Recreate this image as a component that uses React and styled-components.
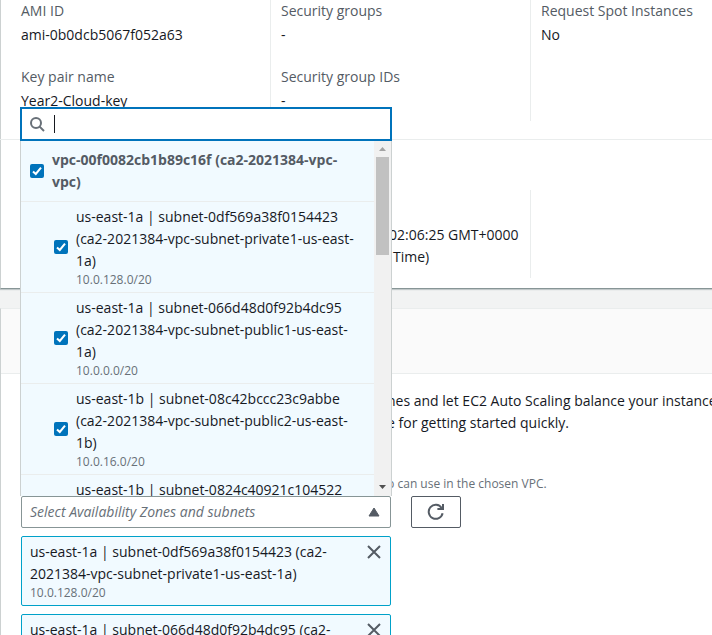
import React from "react";
import styled, { createGlobalStyle } from "styled-components";

const GlobalStyle = createGlobalStyle`
  *, *::before, *::after { box-sizing: border-box; }
  body {
    margin: 0;
    background: #f2f3f3;
    color: #16191f;
    font: 14px/22px "Open Sans", "Noto Sans", sans-serif;
  }
  dl, dd, p { margin: 0; }
  button, input { font: inherit; color: inherit; }
`;

const Page = styled.main`
  display: flex;
  flex-direction: column;
  gap: 19px;
  height: 100vh;
  overflow: hidden;
`;

const Panel = styled.section`
  flex: ${(p) => (p.$fill ? "1 0 auto" : "none")};
  background: #fff;
  border-left: 1px solid #ccd1d1;
  border-top: ${(p) => (p.$fill ? "1px solid #eaeded" : "0")};
  border-bottom: ${(p) => (p.$fill ? "0" : "1px solid #879596")};
  box-shadow: 0 1px 1px rgba(0, 28, 36, 0.2);
`;

const Columns = styled.div`
  display: grid;
  grid-template-columns: 270px 260px 1fr;
  padding: ${(p) => (p.$lower ? "50px 0 10px" : "0 0 18px")};
  border-bottom: ${(p) => (p.$lower ? "0" : "1px solid #eaeded")};
  margin-left: -1px;
`;

const Column = styled.dl`
  display: flex;
  flex-direction: column;
  gap: 20px;
  min-height: ${(p) => (p.$lower ? "88px" : "121px")};
  padding-left: ${(p) => (p.$first ? "21px" : "10px")};
  padding-top: ${(p) => (p.$lower ? "34px" : "0")};
  border-left: ${(p) => (p.$first ? "0" : "1px solid #eaeded")};
`;

const Pair = styled.div`
  display: flex;
  flex-direction: column;
  gap: 2px;
`;

const Term = styled.dt`
  color: #545b64;
`;

const DateValue = styled.dd`
  align-self: flex-end;
  width: 141px;
`;

const TimeZone = styled.span`
  display: block;
  padding-left: 4px;
`;

const PanelHeader = styled.header`
  height: 65px;
  background: #fafafa;
  border-bottom: 1px solid #eaeded;
`;

const PanelBody = styled.div`
  padding: 16px 0 0 20px;
`;

const Description = styled.p`
  padding-left: 366px;
  white-space: nowrap;
`;

const Hint = styled.p`
  padding: 42px 0 4px 366px;
  color: #687078;
  font-size: 12px;
  line-height: 16px;
`;

const FieldRow = styled.div`
  display: flex;
  align-items: flex-start;
  gap: 20px;
`;

const Field = styled.div`
  position: relative;
  width: 370px;
`;

const SelectTrigger = styled.button`
  display: flex;
  align-items: center;
  justify-content: space-between;
  width: 100%;
  height: 32px;
  padding: 0 10px 0 8px;
  background: #fff;
  border: 1px solid #879596;
  border-radius: 2px;
  color: #687078;
  font-style: italic;
  text-align: left;
`;

const RefreshButton = styled.button`
  display: flex;
  align-items: center;
  justify-content: center;
  width: 50px;
  height: 32px;
  padding: 0;
  background: #fff;
  border: 1px solid #545b64;
  border-radius: 2px;
`;

const Menu = styled.div`
  position: absolute;
  bottom: 100%;
  left: -1px;
  right: -1px;
  z-index: 1;
`;

const SearchBox = styled.label`
  display: flex;
  align-items: center;
  gap: 9px;
  height: 34px;
  padding-left: 7px;
  background: #fff;
  border: 2px solid #0073bb;
`;

const SearchInput = styled.input`
  flex: 1;
  min-width: 0;
  height: 18px;
  padding: 0;
  border: 0;
  border-left: 1px solid #16191f;
  outline: 0;
  background: transparent;
`;

const ListFrame = styled.div`
  display: flex;
  height: 355px;
  background: #f1faff;
  border: 1px solid #ccd1d1;
  border-width: 0 1px;
`;

const Options = styled.div`
  flex: 1;
  min-width: 0;
  overflow: hidden;
`;

const Option = styled.label`
  display: flex;
  align-items: center;
  gap: 8px;
  padding: ${(p) => (p.$group ? "8px 9px" : "4px 9px 4px 33px")};
  border-bottom: 1px solid #eaeded;
  color: ${(p) => (p.$group ? "#545b64" : "#16191f")};
  font-weight: ${(p) => (p.$group ? 700 : 400)};
  > :last-child { min-height: ${(p) => (p.$group ? "44px" : "82px")}; }
`;

const CheckWrap = styled.span`
  display: grid;
  flex: none;
  width: 14px;
  height: 14px;
  > * { grid-area: 1 / 1; }
`;

const CheckInput = styled.input`
  appearance: none;
  width: 14px;
  height: 14px;
  margin: 0;
  border-radius: 2px;
  background: ${(p) => (p.checked ? "#0073bb" : "#fff")};
`;

const Line = styled.span`
  display: block;
  white-space: nowrap;
`;

const Small = styled.span`
  display: block;
  color: #687078;
  font-size: 12px;
  font-weight: 400;
  line-height: 16px;
`;

const Scrollbar = styled.div`
  display: flex;
  flex-direction: column;
  flex: none;
  align-items: center;
  width: 17px;
  background: #f1f1f1;
`;

const ScrollArrow = styled.svg`
  flex: none;
  width: 17px;
  height: 16px;
`;

const ScrollTrack = styled.div`
  flex: 1;
`;

const ScrollThumb = styled.div`
  width: 13px;
  height: 98px;
  background: #c1c1c1;
`;

const Tokens = styled.div`
  display: flex;
  flex-direction: column;
  gap: 8px;
  width: 370px;
  padding-top: 8px;
`;

const Token = styled.div`
  display: flex;
  justify-content: space-between;
  align-items: flex-start;
  height: 70px;
  padding: 4px 9px 4px 8px;
  background: #f1faff;
  border: 1px solid #00a1c9;
  border-radius: 2px;
`;

const DismissButton = styled.button`
  display: flex;
  padding: 4px 0 0;
  border: 0;
  background: none;
`;

const GROUP = ["vpc-00f0082cb1b89c16f (ca2-2021384-vpc-", "vpc)"];

const SUBNETS = [
  { lines: ["us-east-1a | subnet-0df569a38f0154423", "(ca2-2021384-vpc-subnet-private1-us-east-", "1a)"], cidr: "10.0.128.0/20" },
  { lines: ["us-east-1a | subnet-066d48d0f92b4dc95", "(ca2-2021384-vpc-subnet-public1-us-east-", "1a)"], cidr: "10.0.0.0/20" },
  { lines: ["us-east-1b | subnet-08c42bccc23c9abbe", "(ca2-2021384-vpc-subnet-public2-us-east-", "1b)"], cidr: "10.0.16.0/20" },
  { lines: ["us-east-1b | subnet-0824c40921c104522"] },
];

const TOKENS = [
  { lines: ["us-east-1a | subnet-0df569a38f0154423 (ca2-", "2021384-vpc-subnet-private1-us-east-1a)"], cidr: "10.0.128.0/20" },
  { lines: ["us-east-1a | subnet-066d48d0f92b4dc95 (ca2-"] },
];

function Lines({ lines, cidr }) {
  return (
    <span>
      {lines.map((line) => (
        <Line key={line}>{line}</Line>
      ))}
      {cidr && <Small>{cidr}</Small>}
    </span>
  );
}

function CheckOption({ group, lines, cidr }) {
  return (
    <Option $group={group}>
      <CheckWrap>
        <CheckInput type="checkbox" checked readOnly />
        <svg width="14" height="14" viewBox="0 0 14 14" fill="none" aria-hidden="true">
          <path d="M3 7.4 5.8 10 11 3.6" stroke="#fff" strokeWidth="2" />
        </svg>
      </CheckWrap>
      <Lines lines={lines} cidr={cidr} />
    </Option>
  );
}

function Detail({ term, value }) {
  return (
    <Pair>
      <Term>{term}</Term>
      <dd>{value}</dd>
    </Pair>
  );
}

function SearchIcon() {
  return (
    <svg width="16" height="16" viewBox="0 0 16 16" fill="none" stroke="#687078" strokeWidth="2" aria-hidden="true">
      <circle cx="7" cy="7" r="5" />
      <path d="m10.6 10.6 4.4 4.4" />
    </svg>
  );
}

function RefreshIcon() {
  return (
    <svg width="18" height="18" viewBox="0 0 18 18" fill="none" stroke="#545b64" strokeWidth="2" aria-hidden="true">
      <path d="M15.6 10.2A7 7 0 1 1 14.6 5" />
      <path d="M16 1v5h-5.6" />
    </svg>
  );
}

export default function App() {
  return (
    <>
      <GlobalStyle />
      <Page>
        <Panel>
          <Columns>
            <Column $first>
              <Detail term="AMI ID" value="ami-0b0dcb5067f052a63" />
              <Detail term="Key pair name" value="Year2-Cloud-key" />
            </Column>
            <Column>
              <Detail term="Security groups" value="-" />
              <Detail term="Security group IDs" value="-" />
            </Column>
            <Column>
              <Detail term="Request Spot Instances" value="No" />
            </Column>
          </Columns>
          <Columns $lower>
            <Column $lower $first />
            <Column $lower>
              <DateValue>
                02:06:25 GMT+0000
                <TimeZone>Time)</TimeZone>
              </DateValue>
            </Column>
            <Column $lower />
          </Columns>
        </Panel>
        <Panel $fill>
          <PanelHeader />
          <PanelBody>
            <Description>
              nes and let EC2 Auto Scaling balance your instance
              <br />e for getting started quickly.
            </Description>
            <Hint>p can use in the chosen VPC.</Hint>
            <FieldRow>
              <Field>
                <SelectTrigger type="button" aria-expanded="true">
                  Select Availability Zones and subnets
                  <svg width="12" height="10" viewBox="0 0 12 10" aria-hidden="true">
                    <path d="M6 1 11 9H1Z" fill="#545b64" stroke="#545b64" strokeLinejoin="round" />
                  </svg>
                </SelectTrigger>
                <Menu>
                  <SearchBox>
                    <SearchIcon />
                    <SearchInput type="text" aria-label="Search subnets" />
                  </SearchBox>
                  <ListFrame>
                    <Options>
                      <CheckOption group lines={GROUP} />
                      {SUBNETS.map((s) => (
                        <CheckOption key={s.lines[0]} {...s} />
                      ))}
                    </Options>
                    <Scrollbar aria-hidden="true">
                      <ScrollArrow viewBox="0 0 17 16">
                        <path d="M5 10h7L8.5 6Z" fill="#a3a3a3" />
                      </ScrollArrow>
                      <ScrollTrack>
                        <ScrollThumb />
                      </ScrollTrack>
                      <ScrollArrow viewBox="0 0 17 16">
                        <path d="M5 5h7L8.5 9Z" fill="#505050" />
                      </ScrollArrow>
                    </Scrollbar>
                  </ListFrame>
                </Menu>
              </Field>
              <RefreshButton type="button" aria-label="Refresh">
                <RefreshIcon />
              </RefreshButton>
            </FieldRow>
            <Tokens>
              {TOKENS.map((t) => (
                <Token key={t.lines[0]}>
                  <Lines {...t} />
                  <DismissButton type="button" aria-label="Remove subnet">
                    <svg width="14" height="14" viewBox="0 0 14 14" fill="none" stroke="#545b64" strokeWidth="2" aria-hidden="true">
                      <path d="m1 1 12 12M13 1 1 13" />
                    </svg>
                  </DismissButton>
                </Token>
              ))}
            </Tokens>
          </PanelBody>
        </Panel>
      </Page>
    </>
  );
}
